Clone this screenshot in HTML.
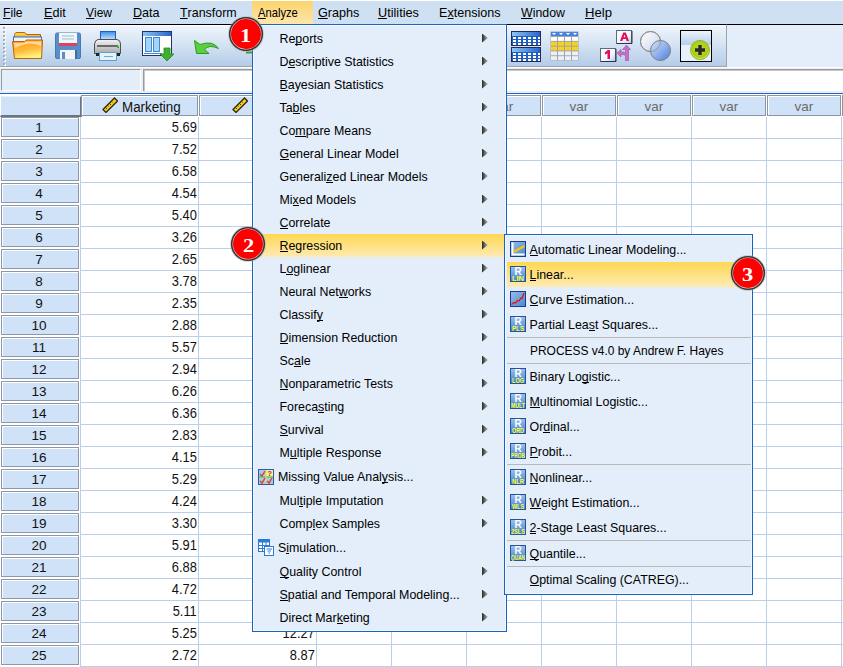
<!DOCTYPE html><html><head><meta charset="utf-8"><style>
*{box-sizing:border-box}
body{margin:0;width:843px;height:667px;overflow:hidden;position:relative;background:#fff;font-family:"Liberation Sans",sans-serif;font-size:12.3px;color:#000}
.a{position:absolute}
#mb{left:0;top:0;width:843px;height:24px;background:#cee0f2;border-top:1px solid #fff}
.mi{position:absolute;top:0;height:23px;line-height:22px;white-space:nowrap}
u{text-decoration:none;border-bottom:1px solid #000;display:inline-block;line-height:11px}
.mt u{line-height:9px}
#tb{left:0;top:24px;width:727px;height:43px;border-top:1px solid #000;background:linear-gradient(#fff,#edf3fb 2px,#d6e4f4 45%,#b4cce8);border-bottom:1px solid #a0a4a8;border-right:1px solid #a0a4a8}
#tbr{left:727px;top:24px;width:116px;height:45px;background:#e4eefa;border-top:1px solid #000}
#ce{left:0;top:67px;width:843px;height:26px;background:#e6eefa;border-top:1px solid #fff}
#nb{left:1px;top:69px;width:140px;height:22px;background:#e4eefa;border-top:1px solid #9a9a9a;border-left:1px solid #9a9a9a;border-right:1px solid #fff;border-bottom:1px solid #fff}
#vb{left:143px;top:69px;width:700px;height:22px;background:#fff;border-top:1px solid #9a9a9a;border-left:1px solid #9a9a9a;box-shadow:inset 1px 1px 0 #c8c8c8}
#bl{left:0;top:93px;width:843px;height:1px;background:#1f66c4}
#grid{left:0;top:94px;width:843px;height:573px;background:#fff}
.hc{position:absolute;background:#d0e2f8;border:1px solid #8a96a4;box-shadow:inset 1px 1px 0 #fff;text-align:center;line-height:21px;color:#6a6a6a;font-size:13.5px}
.rh{position:absolute;left:1px;width:78px;height:20px;background:#d0e2f8;border:1px solid #8c98a8;box-shadow:inset 1px 1px 0 #fff;text-align:center;line-height:20px;color:#111;font-size:13.5px;padding-right:2px}
.vl{position:absolute;top:117px;width:1px;height:550px;background:#bad0ea}
.hl{position:absolute;left:80px;width:763px;height:1px;background:#bad0ea}
.mt{position:absolute;white-space:nowrap;height:23px;font-size:12.4px}
.arr{position:absolute;width:6px;height:9px;background:linear-gradient(90deg,#282828,#585858 35%,#c0c0c0);clip-path:polygon(0 0,100% 50%,0 100%)}
.num{position:absolute;text-align:right;line-height:20px;height:22px;color:#111;font-size:14.3px;padding-right:0}
.num span{display:inline-block;transform:scaleX(0.9);transform-origin:100% 50%}
</style></head><body>

<div id="mb" class="a"></div>
<div class="a" style="left:252px;top:1px;width:61px;height:23px;background:linear-gradient(#fbd46a,#fde6ae)"></div>
<div class="mi" style="left:3.46px;top:2px;font-size:13px;transform:scaleX(0.9350);transform-origin:0 0"><u>F</u>ile</div>
<div class="mi" style="left:44.43px;top:2px;font-size:13px;transform:scaleX(0.9714);transform-origin:0 0"><u>E</u>dit</div>
<div class="mi" style="left:86.00px;top:2px;font-size:13px;transform:scaleX(0.9214);transform-origin:0 0"><u>V</u>iew</div>
<div class="mi" style="left:132.53px;top:2px;font-size:13px;transform:scaleX(0.9692);transform-origin:0 0"><u>D</u>ata</div>
<div class="mi" style="left:180.00px;top:2px;font-size:13px;transform:scaleX(0.9559);transform-origin:0 0"><u>T</u>ransform</div>
<div class="mi" style="left:257.70px;top:2px;font-size:13px;transform:scaleX(0.8609);transform-origin:0 0"><u>A</u>nalyze</div>
<div class="mi" style="left:317.53px;top:2px;font-size:13px;transform:scaleX(0.9683);transform-origin:0 0"><u>G</u>raphs</div>
<div class="mi" style="left:378.02px;top:2px;font-size:13px;transform:scaleX(0.9756);transform-origin:0 0"><u>U</u>tilities</div>
<div class="mi" style="left:439.03px;top:2px;font-size:13px;transform:scaleX(0.9677);transform-origin:0 0">E<u>x</u>tensions</div>
<div class="mi" style="left:521.00px;top:2px;font-size:13px;transform:scaleX(0.9500);transform-origin:0 0"><u>W</u>indow</div>
<div class="mi" style="left:585.09px;top:2px;font-size:13px;transform:scaleX(1.0080);transform-origin:0 0"><u>H</u>elp</div>
<div id="tb" class="a"></div><div id="tbr" class="a"></div>
<svg class="a" style="left:0;top:25px" width="728" height="41" viewBox="0 25 728 41"><defs><linearGradient id="thd" x1="0" y1="0" x2="1" y2="0"><stop offset="0" stop-color="#8cc4f4"/><stop offset="1" stop-color="#2a66c8"/></linearGradient><linearGradient id="fold" x1="0" y1="0" x2="0.3" y2="1"><stop offset="0" stop-color="#ff9a1a"/><stop offset="0.6" stop-color="#ffb838"/><stop offset="1" stop-color="#fff27a"/></linearGradient><linearGradient id="foldb" x1="0" y1="0" x2="0" y2="1"><stop offset="0" stop-color="#ffe060"/><stop offset="1" stop-color="#f4a010"/></linearGradient><linearGradient id="venn" x1="0" y1="0" x2="1" y2="1"><stop offset="0" stop-color="#d8e6fa"/><stop offset="1" stop-color="#4a7ee0"/></linearGradient><linearGradient id="venn1" x1="0" y1="0" x2="1" y2="1"><stop offset="0" stop-color="#ffffff"/><stop offset="1" stop-color="#c8d4ea"/></linearGradient><linearGradient id="sel" x1="0" y1="0" x2="0" y2="1"><stop offset="0" stop-color="#eef4fc"/><stop offset="0.45" stop-color="#b6cfec"/><stop offset="0.47" stop-color="#e6f0fb"/><stop offset="1" stop-color="#e8f1fb"/></linearGradient><radialGradient id="grn" cx="0.5" cy="0.45" r="0.55"><stop offset="0" stop-color="#c4e030"/><stop offset="0.8" stop-color="#a8cc18"/><stop offset="0.9" stop-color="#d0ea60"/><stop offset="1" stop-color="#80a810"/></radialGradient><linearGradient id="prt" x1="0" y1="0" x2="0" y2="1"><stop offset="0" stop-color="#f4f4f4"/><stop offset="1" stop-color="#a8a8a8"/></linearGradient><linearGradient id="papr" x1="0" y1="0" x2="0" y2="1"><stop offset="0" stop-color="#3c8ee8"/><stop offset="1" stop-color="#e8f4fc"/></linearGradient></defs><rect x="4" y="28" width="2" height="2" fill="#fff"/><rect x="3" y="27" width="2" height="2" fill="#a4b0bc"/><rect x="4" y="32" width="2" height="2" fill="#fff"/><rect x="3" y="31" width="2" height="2" fill="#a4b0bc"/><rect x="4" y="36" width="2" height="2" fill="#fff"/><rect x="3" y="35" width="2" height="2" fill="#a4b0bc"/><rect x="4" y="40" width="2" height="2" fill="#fff"/><rect x="3" y="39" width="2" height="2" fill="#a4b0bc"/><rect x="4" y="44" width="2" height="2" fill="#fff"/><rect x="3" y="43" width="2" height="2" fill="#a4b0bc"/><rect x="4" y="48" width="2" height="2" fill="#fff"/><rect x="3" y="47" width="2" height="2" fill="#a4b0bc"/><rect x="4" y="52" width="2" height="2" fill="#fff"/><rect x="3" y="51" width="2" height="2" fill="#a4b0bc"/><rect x="4" y="56" width="2" height="2" fill="#fff"/><rect x="3" y="55" width="2" height="2" fill="#a4b0bc"/><rect x="4" y="60" width="2" height="2" fill="#fff"/><rect x="3" y="59" width="2" height="2" fill="#a4b0bc"/><rect x="4" y="64" width="2" height="2" fill="#fff"/><rect x="3" y="63" width="2" height="2" fill="#a4b0bc"/><path d="M14.5 37.5V34.5Q15 32.5 17 32.5H24Q25.5 32.5 26.5 34.5H40.5V38.5" fill="url(#foldb)" stroke="#b8640c"/><rect x="13.5" y="37" width="28" height="6" fill="#e8f6ff" stroke="#2a70e0" stroke-width="1"/><path d="M12.5 41.5H24.5L26.5 40H42.5L41.5 58.5H14.5Z" fill="url(#fold)" stroke="#c0600a"/><path d="M14 43H24L26 41.5H41V46Q30 40 15 48Z" fill="#fff" opacity="0.55"/><path d="M55.5 34.5Q55.5 33 57 33H79Q80.5 33 80.5 34.5V57Q80.5 58.5 79 58.5H57Q55.5 58.5 55.5 57Z" fill="#5a8ec8" stroke="#4a7ab4"/><rect x="59" y="33" width="18" height="10" fill="#eef8fc"/><rect x="59" y="43" width="18" height="3" fill="#e0405a"/><path d="M62 36H74M62 39H74" stroke="#a8b8c8"/><rect x="60" y="50" width="15" height="9" fill="#f4f4f4"/><rect x="62" y="52" width="3" height="7" fill="#5a8ec8"/><rect x="75" y="50" width="2" height="9" fill="#3e6ea8"/><rect x="100.5" y="31.5" width="15" height="10" fill="url(#papr)" stroke="#1a60d0"/><path d="M94.5 44Q95 40 98 39.5H117Q120.5 40 120.5 44V53.5H94.5Z" fill="url(#prt)" stroke="#505050"/><rect x="97" y="45" width="21" height="2" fill="#6a6a6a"/><rect x="117" y="46" width="2" height="2" fill="#30c030"/><rect x="99.5" y="52.5" width="17" height="8" fill="#e6f2fa" stroke="#5aa0d8"/><path d="M104 56.5H113" stroke="#8aa0b0"/><rect x="96" y="53" width="3" height="3" fill="#222"/><rect x="117" y="53" width="3" height="3" fill="#222"/><rect x="142.5" y="31.5" width="29" height="24" fill="#fff" stroke="#26306a"/><rect x="143" y="32" width="28" height="4" fill="url(#thd)"/><rect x="145.5" y="37.5" width="6" height="14" fill="#a8d4f4" stroke="#3a8ad8"/><rect x="153.5" y="37.5" width="6" height="14" fill="#a8d4f4" stroke="#3a8ad8"/><path d="M144 53.5H162" stroke="#3a8ad8"/><path d="M164 48H170V54H174L167 61L160 54H164Z" fill="#3cb030" stroke="#2a8a20" stroke-width="0.8"/><path d="M194.5 40.5L196.5 53.5L209 53.5L204.5 49.5Q209 44 218.5 48.5Q213 40 200 44.5Z" fill="#5ad040" stroke="#2e9a20"/><path d="M246 52.5H252" stroke="#3aa028" stroke-width="2"/><rect x="511.5" y="31.5" width="29" height="14" fill="#1f5fc0" stroke="#22285a"/><rect x="512" y="32" width="28" height="4" fill="url(#thd)"/><rect x="513" y="37" width="3" height="2" fill="#fff"/><rect x="518" y="37" width="3" height="2" fill="#fff"/><rect x="523" y="37" width="3" height="2" fill="#fff"/><rect x="528" y="37" width="3" height="2" fill="#fff"/><rect x="533" y="37" width="3" height="2" fill="#fff"/><rect x="538" y="37" width="2" height="2" fill="#fff"/><rect x="513" y="40" width="3" height="2" fill="#fff"/><rect x="518" y="40" width="3" height="2" fill="#fff"/><rect x="523" y="40" width="3" height="2" fill="#fff"/><rect x="528" y="40" width="3" height="2" fill="#fff"/><rect x="533" y="40" width="3" height="2" fill="#fff"/><rect x="538" y="40" width="2" height="2" fill="#fff"/><rect x="513" y="43" width="3" height="2" fill="#fff"/><rect x="518" y="43" width="3" height="2" fill="#fff"/><rect x="523" y="43" width="3" height="2" fill="#fff"/><rect x="528" y="43" width="3" height="2" fill="#fff"/><rect x="533" y="43" width="3" height="2" fill="#fff"/><rect x="538" y="43" width="2" height="2" fill="#fff"/><rect x="511.5" y="47.5" width="29" height="14" fill="#1f5fc0" stroke="#22285a"/><rect x="512" y="48" width="28" height="4" fill="url(#thd)"/><rect x="513" y="53" width="3" height="2" fill="#fff"/><rect x="518" y="53" width="3" height="2" fill="#fff"/><rect x="523" y="53" width="3" height="2" fill="#fff"/><rect x="528" y="53" width="3" height="2" fill="#fff"/><rect x="533" y="53" width="3" height="2" fill="#fff"/><rect x="538" y="53" width="2" height="2" fill="#fff"/><rect x="513" y="56" width="3" height="2" fill="#fff"/><rect x="518" y="56" width="3" height="2" fill="#fff"/><rect x="523" y="56" width="3" height="2" fill="#fff"/><rect x="528" y="56" width="3" height="2" fill="#fff"/><rect x="533" y="56" width="3" height="2" fill="#fff"/><rect x="538" y="56" width="2" height="2" fill="#fff"/><rect x="513" y="59" width="3" height="2" fill="#fff"/><rect x="518" y="59" width="3" height="2" fill="#fff"/><rect x="523" y="59" width="3" height="2" fill="#fff"/><rect x="528" y="59" width="3" height="2" fill="#fff"/><rect x="533" y="59" width="3" height="2" fill="#fff"/><rect x="538" y="59" width="2" height="2" fill="#fff"/><rect x="550.5" y="31.5" width="28" height="29" fill="#9ca4b0"/><rect x="551" y="32" width="27" height="4" fill="#4a82dc"/><rect x="551" y="37.0" width="6" height="3.9" fill="#ffffff"/><rect x="558" y="37.0" width="6" height="3.9" fill="#ffffff"/><rect x="565" y="37.0" width="6" height="3.9" fill="#ffffff"/><rect x="572" y="37.0" width="6" height="3.9" fill="#ffffff"/><rect x="551" y="41.8" width="6" height="3.9" fill="#f8d020"/><rect x="558" y="41.8" width="6" height="3.9" fill="#f8d020"/><rect x="565" y="41.8" width="6" height="3.9" fill="#f8d020"/><rect x="572" y="41.8" width="6" height="3.9" fill="#f8d020"/><rect x="551" y="46.6" width="6" height="3.9" fill="#f8d020"/><rect x="558" y="46.6" width="6" height="3.9" fill="#f8d020"/><rect x="565" y="46.6" width="6" height="3.9" fill="#f8d020"/><rect x="572" y="46.6" width="6" height="3.9" fill="#f8d020"/><rect x="551" y="51.4" width="6" height="3.9" fill="#eef0f6"/><rect x="558" y="51.4" width="6" height="3.9" fill="#eef0f6"/><rect x="565" y="51.4" width="6" height="3.9" fill="#eef0f6"/><rect x="572" y="51.4" width="6" height="3.9" fill="#eef0f6"/><rect x="551" y="56.2" width="6" height="3.9" fill="#eef0f6"/><rect x="558" y="56.2" width="6" height="3.9" fill="#eef0f6"/><rect x="565" y="56.2" width="6" height="3.9" fill="#eef0f6"/><rect x="572" y="56.2" width="6" height="3.9" fill="#eef0f6"/><path d="M552 33H556L554 35Z" fill="#fff"/><path d="M559 33H563L561 35Z" fill="#fff"/><path d="M566 33H570L568 35Z" fill="#fff"/><path d="M573 33H577L575 35Z" fill="#fff"/><defs><linearGradient id="box" x1="0" y1="0" x2="1" y2="1"><stop offset="0" stop-color="#ffffff"/><stop offset="0.6" stop-color="#f4f6fa"/><stop offset="1" stop-color="#b8c4dc"/></linearGradient></defs><rect x="616.5" y="30.5" width="15" height="13" fill="url(#box)" stroke="#5a6a80"/><path d="M617 43.5H632V31" stroke="#2a3448" fill="none"/><path d="M620 41L623.2 32.5H625.8L629 41H626.6L626 39H623L622.4 41ZM623.6 37.2H625.4L624.5 34.4Z" fill="#e0105a"/><rect x="600.5" y="48.5" width="15" height="13" fill="url(#box)" stroke="#5a6a80"/><path d="M601 61.5H616V49" stroke="#2a3448" fill="none"/><path d="M607.5 50H610V59H607.5V53.2Q606.5 54 605 54.4V52.2Q606.8 51.6 607.5 50Z" fill="#e0105a"/><path d="M626.5 45L630.5 49.5H628.5V60.5H625.5V56Q625 54.5 622.5 54.5H621V57L617 53L621 49.5V52H623Q624.5 52 625.5 53V49.5H622.5Z" fill="#c870c8" stroke="#9a4aa0" stroke-width="0.6"/><circle cx="650.5" cy="41.5" r="10" fill="url(#venn1)" stroke="#8a8a8a"/><circle cx="660.5" cy="50.5" r="10" fill="url(#venn)" stroke="#7a7a7a"/><circle cx="650.5" cy="41.5" r="10" fill="none" stroke="#8a8a8a" opacity="0.8"/><rect x="680.5" y="30.5" width="31" height="31" fill="url(#sel)" stroke="#000"/><circle cx="700" cy="50" r="9.6" fill="url(#grn)" stroke="#86ac14" stroke-width="0.8"/><path d="M698.3 45H701.7V48.3H705V51.7H701.7V55H698.3V51.7H695V48.3H698.3Z" fill="#2a2a2a"/></svg>
<div id="ce" class="a"></div><div id="nb" class="a"></div><div id="vb" class="a"></div><div id="bl" class="a"></div>
<div id="grid" class="a"></div>
<div class="a" style="left:0;top:96px;width:82px;height:21px;background:#d0e2f8;border-right:2px solid #6c7480;border-bottom:2px solid #6c7480;border-left:1px solid #fff;border-top:1px solid #e8f0fa"></div>
<div class="hc" style="left:81px;top:95px;width:117px;height:21px"><svg width="16" height="16" viewBox="0 0 16 16" style="position:absolute;left:20px;top:1px"><path d="M1 12.5L12.5 1L15.5 4L4 15.5Z" fill="#f4cc20" stroke="#2e2a10" stroke-width="1.3"/><path d="M3.5 10.5L5 12M5.5 8.5L6.5 9.5M7.5 6.5L9 8M9.5 4.5L10.5 5.5" stroke="#2e2a10" stroke-width="0.9"/></svg><span style="position:absolute;left:40px;top:1px;color:#111;font-size:14px;transform:scaleX(0.955);transform-origin:0 0">Marketing</span></div>
<div class="hc" style="left:199px;top:95px;width:117px;height:21px"><svg width="16" height="16" viewBox="0 0 16 16" style="position:absolute;left:32px;top:1px"><path d="M1 12.5L12.5 1L15.5 4L4 15.5Z" fill="#f4cc20" stroke="#2e2a10" stroke-width="1.3"/><path d="M3.5 10.5L5 12M5.5 8.5L6.5 9.5M7.5 6.5L9 8M9.5 4.5L10.5 5.5" stroke="#2e2a10" stroke-width="0.9"/></svg></div>
<div class="hc" style="left:317px;top:95px;width:74px;height:21px">var</div>
<div class="hc" style="left:392px;top:95px;width:74px;height:21px">var</div>
<div class="hc" style="left:467px;top:95px;width:74px;height:21px">var</div>
<div class="hc" style="left:542px;top:95px;width:74px;height:21px">var</div>
<div class="hc" style="left:617px;top:95px;width:74px;height:21px">var</div>
<div class="hc" style="left:692px;top:95px;width:74px;height:21px">var</div>
<div class="hc" style="left:767px;top:95px;width:74px;height:21px">var</div>
<div class="hc" style="left:842px;top:95px;width:74px;height:21px">var</div>
<div class="vl" style="left:80px"></div>
<div class="vl" style="left:198px"></div>
<div class="vl" style="left:316px"></div>
<div class="vl" style="left:391px"></div>
<div class="vl" style="left:466px"></div>
<div class="vl" style="left:541px"></div>
<div class="vl" style="left:616px"></div>
<div class="vl" style="left:691px"></div>
<div class="vl" style="left:766px"></div>
<div class="vl" style="left:841px"></div>
<div class="vl" style="left:916px"></div>
<div class="hl" style="top:138px"></div>
<div class="rh" style="top:117px">1</div>
<div class="num" style="left:80px;top:117px;width:116.5px"><span>5.69</span></div>
<div class="hl" style="top:160px"></div>
<div class="rh" style="top:139px">2</div>
<div class="num" style="left:80px;top:139px;width:116.5px"><span>7.52</span></div>
<div class="hl" style="top:182px"></div>
<div class="rh" style="top:161px">3</div>
<div class="num" style="left:80px;top:161px;width:116.5px"><span>6.58</span></div>
<div class="hl" style="top:204px"></div>
<div class="rh" style="top:183px">4</div>
<div class="num" style="left:80px;top:183px;width:116.5px"><span>4.54</span></div>
<div class="hl" style="top:226px"></div>
<div class="rh" style="top:205px">5</div>
<div class="num" style="left:80px;top:205px;width:116.5px"><span>5.40</span></div>
<div class="hl" style="top:248px"></div>
<div class="rh" style="top:227px">6</div>
<div class="num" style="left:80px;top:227px;width:116.5px"><span>3.26</span></div>
<div class="hl" style="top:270px"></div>
<div class="rh" style="top:249px">7</div>
<div class="num" style="left:80px;top:249px;width:116.5px"><span>2.65</span></div>
<div class="hl" style="top:292px"></div>
<div class="rh" style="top:271px">8</div>
<div class="num" style="left:80px;top:271px;width:116.5px"><span>3.78</span></div>
<div class="hl" style="top:314px"></div>
<div class="rh" style="top:293px">9</div>
<div class="num" style="left:80px;top:293px;width:116.5px"><span>2.35</span></div>
<div class="hl" style="top:336px"></div>
<div class="rh" style="top:315px">10</div>
<div class="num" style="left:80px;top:315px;width:116.5px"><span>2.88</span></div>
<div class="hl" style="top:358px"></div>
<div class="rh" style="top:337px">11</div>
<div class="num" style="left:80px;top:337px;width:116.5px"><span>5.57</span></div>
<div class="hl" style="top:380px"></div>
<div class="rh" style="top:359px">12</div>
<div class="num" style="left:80px;top:359px;width:116.5px"><span>2.94</span></div>
<div class="hl" style="top:402px"></div>
<div class="rh" style="top:381px">13</div>
<div class="num" style="left:80px;top:381px;width:116.5px"><span>6.26</span></div>
<div class="hl" style="top:424px"></div>
<div class="rh" style="top:403px">14</div>
<div class="num" style="left:80px;top:403px;width:116.5px"><span>6.36</span></div>
<div class="hl" style="top:446px"></div>
<div class="rh" style="top:425px">15</div>
<div class="num" style="left:80px;top:425px;width:116.5px"><span>2.83</span></div>
<div class="hl" style="top:468px"></div>
<div class="rh" style="top:447px">16</div>
<div class="num" style="left:80px;top:447px;width:116.5px"><span>4.15</span></div>
<div class="hl" style="top:490px"></div>
<div class="rh" style="top:469px">17</div>
<div class="num" style="left:80px;top:469px;width:116.5px"><span>5.29</span></div>
<div class="hl" style="top:512px"></div>
<div class="rh" style="top:491px">18</div>
<div class="num" style="left:80px;top:491px;width:116.5px"><span>4.24</span></div>
<div class="hl" style="top:534px"></div>
<div class="rh" style="top:513px">19</div>
<div class="num" style="left:80px;top:513px;width:116.5px"><span>3.30</span></div>
<div class="hl" style="top:556px"></div>
<div class="rh" style="top:535px">20</div>
<div class="num" style="left:80px;top:535px;width:116.5px"><span>5.91</span></div>
<div class="hl" style="top:578px"></div>
<div class="rh" style="top:557px">21</div>
<div class="num" style="left:80px;top:557px;width:116.5px"><span>6.88</span></div>
<div class="hl" style="top:600px"></div>
<div class="rh" style="top:579px">22</div>
<div class="num" style="left:80px;top:579px;width:116.5px"><span>4.72</span></div>
<div class="hl" style="top:622px"></div>
<div class="rh" style="top:601px">23</div>
<div class="num" style="left:80px;top:601px;width:116.5px"><span>5.11</span></div>
<div class="hl" style="top:644px"></div>
<div class="rh" style="top:623px">24</div>
<div class="num" style="left:80px;top:623px;width:116.5px"><span>5.25</span></div>
<div class="num" style="left:198px;top:623px;width:116.5px"><span>12.27</span></div>
<div class="hl" style="top:666px"></div>
<div class="rh" style="top:645px">25</div>
<div class="num" style="left:80px;top:645px;width:116.5px"><span>2.72</span></div>
<div class="num" style="left:198px;top:645px;width:116.5px"><span>8.87</span></div>
<div class="a" style="left:252px;top:24px;width:255px;height:608px;background:#e3eefa;border:1px solid #1664c0;box-shadow:inset 1px 1px 0 #f8f8ff,inset -1px -1px 0 #f4f6ff"></div>
<div class="mt" style="left:279.5px;top:28px;line-height:23px">Re<u>p</u>orts</div>
<div class="arr" style="left:482px;top:33.5px"></div>
<div class="mt" style="left:279.5px;top:51px;line-height:23px">D<u>e</u>scriptive Statistics</div>
<div class="arr" style="left:482px;top:56.5px"></div>
<div class="mt" style="left:279.5px;top:74px;line-height:23px"><u>B</u>ayesian Statistics</div>
<div class="arr" style="left:482px;top:79.5px"></div>
<div class="mt" style="left:279.5px;top:97px;line-height:23px">Ta<u>b</u>les</div>
<div class="arr" style="left:482px;top:102.5px"></div>
<div class="mt" style="left:279.5px;top:120px;line-height:23px">Co<u>m</u>pare Means</div>
<div class="arr" style="left:482px;top:125.5px"></div>
<div class="mt" style="left:279.5px;top:143px;line-height:23px"><u>G</u>eneral Linear Model</div>
<div class="arr" style="left:482px;top:148.5px"></div>
<div class="mt" style="left:279.5px;top:166px;line-height:23px">Generali<u>z</u>ed Linear Models</div>
<div class="arr" style="left:482px;top:171.5px"></div>
<div class="mt" style="left:279.5px;top:189px;line-height:23px">Mi<u>x</u>ed Models</div>
<div class="arr" style="left:482px;top:194.5px"></div>
<div class="mt" style="left:279.5px;top:212px;line-height:23px"><u>C</u>orrelate</div>
<div class="arr" style="left:482px;top:217.5px"></div>
<div class="a" style="left:253px;top:234px;width:253px;height:23px;background:linear-gradient(#ffd852,#fdeab4)"></div>
<div class="mt" style="left:279.5px;top:235px;line-height:23px"><u>R</u>egression</div>
<div class="arr" style="left:482px;top:240.5px"></div>
<div class="mt" style="left:279.5px;top:258px;line-height:23px">L<u>o</u>glinear</div>
<div class="arr" style="left:482px;top:263.5px"></div>
<div class="mt" style="left:279.5px;top:281px;line-height:23px">Neural Net<u>w</u>orks</div>
<div class="arr" style="left:482px;top:286.5px"></div>
<div class="mt" style="left:279.5px;top:304px;line-height:23px">Classif<u>y</u></div>
<div class="arr" style="left:482px;top:309.5px"></div>
<div class="mt" style="left:279.5px;top:327px;line-height:23px"><u>D</u>imension Reduction</div>
<div class="arr" style="left:482px;top:332.5px"></div>
<div class="mt" style="left:279.5px;top:350px;line-height:23px">Sc<u>a</u>le</div>
<div class="arr" style="left:482px;top:355.5px"></div>
<div class="mt" style="left:279.5px;top:373px;line-height:23px"><u>N</u>onparametric Tests</div>
<div class="arr" style="left:482px;top:378.5px"></div>
<div class="mt" style="left:279.5px;top:396px;line-height:23px">Foreca<u>s</u>ting</div>
<div class="arr" style="left:482px;top:401.5px"></div>
<div class="mt" style="left:279.5px;top:419px;line-height:23px"><u>S</u>urvival</div>
<div class="arr" style="left:482px;top:424.5px"></div>
<div class="mt" style="left:279.5px;top:442px;line-height:23px">M<u>u</u>ltiple Response</div>
<div class="arr" style="left:482px;top:447.5px"></div>
<div class="mt" style="left:278px;top:465px;line-height:25px">Missing Value Anal<u>y</u>sis...</div>
<svg class="a" style="left:258px;top:469px" width="16" height="16" viewBox="0 0 16 16"><rect x="0.5" y="0.5" width="15" height="15" fill="#a8c8f0" stroke="#2a5ab0"/><rect x="8" y="1" width="7" height="7" fill="#f8f080"/><path d="M1 8H15" stroke="#60c040" stroke-width="1.2"/><path d="M8 1V15" stroke="#e8e060" stroke-width="1"/><path d="M2 5L4 7L7 2M2 12L4 14L7 9M9 12L11 14L14 9" stroke="#e04020" stroke-width="1.4" fill="none"/><text x="11.5" y="7" text-anchor="middle" font-size="7.5" font-weight="bold" font-family="Liberation Sans" fill="#8a2a9a">?</text></svg>
<div class="mt" style="left:279.5px;top:490px;line-height:23px">Mul<u>t</u>iple Imputation</div>
<div class="arr" style="left:482px;top:495.5px"></div>
<div class="mt" style="left:279.5px;top:513px;line-height:23px">Comp<u>l</u>ex Samples</div>
<div class="arr" style="left:482px;top:518.5px"></div>
<div class="mt" style="left:278px;top:536px;line-height:25px">S<u>i</u>mulation...</div>
<svg class="a" style="left:258px;top:539px" width="17" height="17" viewBox="0 0 17 17"><rect x="0.5" y="0.5" width="11" height="12" fill="#fff" stroke="#2a7ad8"/><rect x="1" y="1" width="10" height="2.5" fill="#2a7ad8"/><path d="M0.5 6.5H11.5M0.5 9.5H11.5M4.5 0.5V12.5M8 0.5V12.5" stroke="#2a7ad8"/><rect x="6.5" y="7.5" width="9" height="9" fill="#fff" stroke="#2a7ad8"/><path d="M8.5 10H14M9.5 12H13M10.5 14H12" stroke="#2a7ad8" stroke-width="1.2"/></svg>
<div class="mt" style="left:279.5px;top:561px;line-height:23px"><u>Q</u>uality Control</div>
<div class="arr" style="left:482px;top:566.5px"></div>
<div class="mt" style="left:279.5px;top:584px;line-height:23px"><u>S</u>patial and Temporal Modeling...</div>
<div class="arr" style="left:482px;top:589.5px"></div>
<div class="mt" style="left:279.5px;top:607px;line-height:23px">Direct Mar<u>k</u>eting</div>
<div class="arr" style="left:482px;top:612.5px"></div>
<div class="a" style="left:504px;top:234px;width:249px;height:361px;background:#e3eefa;border:1px solid #1664c0;box-shadow:inset 1px 1px 0 #f8f8ff,inset -1px -1px 0 #f4f6ff"></div>
<div class="mt" style="left:529.5px;top:238px;line-height:25px;font-size:12.4px;"><u>A</u>utomatic Linear Modeling...</div>
<svg class="a" style="left:510px;top:241px" width="16" height="16" viewBox="0 0 16 16"><defs><linearGradient id="ga" x1="0" y1="0" x2="1" y2="1"><stop offset="0" stop-color="#9cbce4"/><stop offset="1" stop-color="#4a8ad0"/></linearGradient></defs><rect x="0.5" y="0.5" width="15" height="15" fill="url(#ga)" stroke="#1c3c94"/><path d="M1.5 1.5H3.5V12.5H14.5V14.5H1.5Z" fill="#fff"/><path d="M3.5 11L14.5 5" stroke="#f4c800" stroke-width="2"/></svg>
<div class="a" style="left:507px;top:262px;width:244px;height:25px;background:linear-gradient(#ffd852,#fdeab4)"></div>
<div class="mt" style="left:529.5px;top:263px;line-height:25px;font-size:12.4px;"><u>L</u>inear...</div>
<svg class="a" style="left:510px;top:266px" width="16" height="16" viewBox="0 0 16 16"><defs><linearGradient id="g262" x1="0" y1="0" x2="0" y2="1"><stop offset="0" stop-color="#9ec0e8"/><stop offset="0.5" stop-color="#6ea0dc"/><stop offset="1" stop-color="#3a80d0"/></linearGradient></defs><rect x="0.5" y="0.5" width="15" height="15" fill="url(#g262)" stroke="#24549c"/><text x="8" y="9" text-anchor="middle" font-size="10" font-weight="bold" font-family="Liberation Sans" fill="#fff">R</text><text x="8" y="14.6" text-anchor="middle" font-size="6.5" font-weight="bold" font-family="Liberation Sans" fill="#ffff30" textLength="12" lengthAdjust="spacingAndGlyphs">LIN</text></svg>
<div class="mt" style="left:529.5px;top:288px;line-height:25px;font-size:12.4px;"><u>C</u>urve Estimation...</div>
<svg class="a" style="left:510px;top:291px" width="16" height="16" viewBox="0 0 16 16"><defs><linearGradient id="gc" x1="0" y1="0" x2="1" y2="1"><stop offset="0" stop-color="#9cbce4"/><stop offset="1" stop-color="#4a8ad0"/></linearGradient></defs><rect x="0.5" y="0.5" width="15" height="15" fill="url(#gc)" stroke="#1c3c94"/><path d="M1.5 13.5L4 11.5L5.5 12L7.5 9.5L9 10L11 7L12 7.5L14 2" stroke="#d81818" stroke-width="1.3" fill="none"/></svg>
<div class="mt" style="left:529.5px;top:313px;line-height:25px;font-size:12.4px;">Partial Lea<u>s</u>t Squares...</div>
<svg class="a" style="left:510px;top:316px" width="16" height="16" viewBox="0 0 16 16"><defs><linearGradient id="g312" x1="0" y1="0" x2="0" y2="1"><stop offset="0" stop-color="#9ec0e8"/><stop offset="0.5" stop-color="#6ea0dc"/><stop offset="1" stop-color="#3a80d0"/></linearGradient></defs><rect x="0.5" y="0.5" width="15" height="15" fill="url(#g312)" stroke="#24549c"/><text x="8" y="9" text-anchor="middle" font-size="10" font-weight="bold" font-family="Liberation Sans" fill="#fff">R</text><text x="8" y="14.6" text-anchor="middle" font-size="6.5" font-weight="bold" font-family="Liberation Sans" fill="#ffff30" textLength="12" lengthAdjust="spacingAndGlyphs">PLS</text></svg>
<div class="a" style="left:507px;top:337px;width:244px;height:1px;background:#b9b9b9"></div>
<div class="mt" style="left:529.5px;top:339px;line-height:25px;font-size:12.4px;transform:scaleX(0.965);transform-origin:0 0;">PROCESS v4.0 by Andrew F. Hayes</div>
<div class="a" style="left:507px;top:363px;width:244px;height:1px;background:#b9b9b9"></div>
<div class="mt" style="left:529.5px;top:365px;line-height:25px;font-size:12.4px;">Binary Lo<u>g</u>istic...</div>
<svg class="a" style="left:510px;top:368px" width="16" height="16" viewBox="0 0 16 16"><defs><linearGradient id="g364" x1="0" y1="0" x2="0" y2="1"><stop offset="0" stop-color="#9ec0e8"/><stop offset="0.5" stop-color="#6ea0dc"/><stop offset="1" stop-color="#3a80d0"/></linearGradient></defs><rect x="0.5" y="0.5" width="15" height="15" fill="url(#g364)" stroke="#24549c"/><text x="8" y="9" text-anchor="middle" font-size="10" font-weight="bold" font-family="Liberation Sans" fill="#fff">R</text><text x="8" y="14.6" text-anchor="middle" font-size="6.5" font-weight="bold" font-family="Liberation Sans" fill="#ffff30" textLength="12" lengthAdjust="spacingAndGlyphs">LOG</text></svg>
<div class="mt" style="left:529.5px;top:390px;line-height:25px;font-size:12.4px;"><u>M</u>ultinomial Logistic...</div>
<svg class="a" style="left:510px;top:393px" width="16" height="16" viewBox="0 0 16 16"><defs><linearGradient id="g389" x1="0" y1="0" x2="0" y2="1"><stop offset="0" stop-color="#9ec0e8"/><stop offset="0.5" stop-color="#6ea0dc"/><stop offset="1" stop-color="#3a80d0"/></linearGradient></defs><rect x="0.5" y="0.5" width="15" height="15" fill="url(#g389)" stroke="#24549c"/><text x="8" y="9" text-anchor="middle" font-size="10" font-weight="bold" font-family="Liberation Sans" fill="#fff">R</text><text x="8" y="14.6" text-anchor="middle" font-size="6.5" font-weight="bold" font-family="Liberation Sans" fill="#ffff30" textLength="14" lengthAdjust="spacingAndGlyphs">MULT</text></svg>
<div class="mt" style="left:529.5px;top:415px;line-height:25px;font-size:12.4px;">Or<u>d</u>inal...</div>
<svg class="a" style="left:510px;top:418px" width="16" height="16" viewBox="0 0 16 16"><defs><linearGradient id="g414" x1="0" y1="0" x2="0" y2="1"><stop offset="0" stop-color="#9ec0e8"/><stop offset="0.5" stop-color="#6ea0dc"/><stop offset="1" stop-color="#3a80d0"/></linearGradient></defs><rect x="0.5" y="0.5" width="15" height="15" fill="url(#g414)" stroke="#24549c"/><text x="8" y="9" text-anchor="middle" font-size="10" font-weight="bold" font-family="Liberation Sans" fill="#fff">R</text><text x="8" y="14.6" text-anchor="middle" font-size="6.5" font-weight="bold" font-family="Liberation Sans" fill="#ffff30" textLength="12" lengthAdjust="spacingAndGlyphs">ORD</text></svg>
<div class="mt" style="left:529.5px;top:440px;line-height:25px;font-size:12.4px;"><u>P</u>robit...</div>
<svg class="a" style="left:510px;top:443px" width="16" height="16" viewBox="0 0 16 16"><defs><linearGradient id="g439" x1="0" y1="0" x2="0" y2="1"><stop offset="0" stop-color="#9ec0e8"/><stop offset="0.5" stop-color="#6ea0dc"/><stop offset="1" stop-color="#3a80d0"/></linearGradient></defs><rect x="0.5" y="0.5" width="15" height="15" fill="url(#g439)" stroke="#24549c"/><text x="8" y="9" text-anchor="middle" font-size="10" font-weight="bold" font-family="Liberation Sans" fill="#fff">R</text><text x="8" y="14.6" text-anchor="middle" font-size="6.5" font-weight="bold" font-family="Liberation Sans" fill="#ffff30" textLength="14" lengthAdjust="spacingAndGlyphs">PROB</text></svg>
<div class="a" style="left:507px;top:464px;width:244px;height:1px;background:#b9b9b9"></div>
<div class="mt" style="left:529.5px;top:466px;line-height:25px;font-size:12.4px;"><u>N</u>onlinear...</div>
<svg class="a" style="left:510px;top:469px" width="16" height="16" viewBox="0 0 16 16"><defs><linearGradient id="g465" x1="0" y1="0" x2="0" y2="1"><stop offset="0" stop-color="#9ec0e8"/><stop offset="0.5" stop-color="#6ea0dc"/><stop offset="1" stop-color="#3a80d0"/></linearGradient></defs><rect x="0.5" y="0.5" width="15" height="15" fill="url(#g465)" stroke="#24549c"/><text x="8" y="9" text-anchor="middle" font-size="10" font-weight="bold" font-family="Liberation Sans" fill="#fff">R</text><text x="8" y="14.6" text-anchor="middle" font-size="6.5" font-weight="bold" font-family="Liberation Sans" fill="#ffff30" textLength="12" lengthAdjust="spacingAndGlyphs">NLR</text></svg>
<div class="mt" style="left:529.5px;top:491px;line-height:25px;font-size:12.4px;"><u>W</u>eight Estimation...</div>
<svg class="a" style="left:510px;top:494px" width="16" height="16" viewBox="0 0 16 16"><defs><linearGradient id="g490" x1="0" y1="0" x2="0" y2="1"><stop offset="0" stop-color="#9ec0e8"/><stop offset="0.5" stop-color="#6ea0dc"/><stop offset="1" stop-color="#3a80d0"/></linearGradient></defs><rect x="0.5" y="0.5" width="15" height="15" fill="url(#g490)" stroke="#24549c"/><text x="8" y="9" text-anchor="middle" font-size="10" font-weight="bold" font-family="Liberation Sans" fill="#fff">R</text><text x="8" y="14.6" text-anchor="middle" font-size="6.5" font-weight="bold" font-family="Liberation Sans" fill="#ffff30" textLength="12" lengthAdjust="spacingAndGlyphs">WLS</text></svg>
<div class="mt" style="left:529.5px;top:516px;line-height:25px;font-size:12.4px;"><u>2</u>-Stage Least Squares...</div>
<svg class="a" style="left:510px;top:519px" width="16" height="16" viewBox="0 0 16 16"><defs><linearGradient id="g515" x1="0" y1="0" x2="0" y2="1"><stop offset="0" stop-color="#9ec0e8"/><stop offset="0.5" stop-color="#6ea0dc"/><stop offset="1" stop-color="#3a80d0"/></linearGradient></defs><rect x="0.5" y="0.5" width="15" height="15" fill="url(#g515)" stroke="#24549c"/><text x="8" y="9" text-anchor="middle" font-size="10" font-weight="bold" font-family="Liberation Sans" fill="#fff">R</text><text x="8" y="14.6" text-anchor="middle" font-size="6.5" font-weight="bold" font-family="Liberation Sans" fill="#ffff30" textLength="14" lengthAdjust="spacingAndGlyphs">2SLS</text></svg>
<div class="a" style="left:507px;top:540px;width:244px;height:1px;background:#b9b9b9"></div>
<div class="mt" style="left:529.5px;top:542px;line-height:25px;font-size:12.4px;"><u>Q</u>uantile...</div>
<svg class="a" style="left:510px;top:545px" width="16" height="16" viewBox="0 0 16 16"><defs><linearGradient id="g541" x1="0" y1="0" x2="0" y2="1"><stop offset="0" stop-color="#9ec0e8"/><stop offset="0.5" stop-color="#6ea0dc"/><stop offset="1" stop-color="#3a80d0"/></linearGradient></defs><rect x="0.5" y="0.5" width="15" height="15" fill="url(#g541)" stroke="#24549c"/><text x="8" y="9" text-anchor="middle" font-size="10" font-weight="bold" font-family="Liberation Sans" fill="#fff">R</text><text x="8" y="14.6" text-anchor="middle" font-size="6.5" font-weight="bold" font-family="Liberation Sans" fill="#ffff30" textLength="14" lengthAdjust="spacingAndGlyphs">QUAN</text></svg>
<div class="a" style="left:507px;top:566px;width:244px;height:1px;background:#b9b9b9"></div>
<div class="mt" style="left:529.5px;top:568px;line-height:25px;font-size:12.4px;"><u>O</u>ptimal Scaling (CATREG)...</div>
<svg class="a" style="left:227.8px;top:16px" width="36" height="36" viewBox="0 0 36 36"><circle cx="18" cy="18" r="18" fill="#b0b0b0" opacity="0.5"/><circle cx="18" cy="18" r="17.1" fill="#363636"/><circle cx="18" cy="18" r="15.5" fill="#f4d0d0"/><circle cx="18" cy="18" r="15" fill="#f00"/></svg>
<div class="a" style="left:228.3px;top:16.5px;width:35px;height:35px;color:#fff;font-family:Liberation Serif,serif;font-weight:bold;font-size:18px;line-height:39px;text-align:center"><span style="display:inline-block;transform:scaleX(1.25)">1</span></div>
<svg class="a" style="left:230px;top:226px" width="36" height="36" viewBox="0 0 36 36"><circle cx="18" cy="18" r="18" fill="#b0b0b0" opacity="0.5"/><circle cx="18" cy="18" r="17.1" fill="#363636"/><circle cx="18" cy="18" r="15.5" fill="#f4d0d0"/><circle cx="18" cy="18" r="15" fill="#f00"/></svg>
<div class="a" style="left:230.5px;top:226.5px;width:35px;height:35px;color:#fff;font-family:Liberation Serif,serif;font-weight:bold;font-size:18px;line-height:39px;text-align:center"><span style="display:inline-block;transform:scaleX(1.25)">2</span></div>
<svg class="a" style="left:729.8px;top:255px" width="36" height="36" viewBox="0 0 36 36"><circle cx="18" cy="18" r="18" fill="#b0b0b0" opacity="0.5"/><circle cx="18" cy="18" r="17.1" fill="#363636"/><circle cx="18" cy="18" r="15.5" fill="#f4d0d0"/><circle cx="18" cy="18" r="15" fill="#f00"/></svg>
<div class="a" style="left:730.3px;top:255.5px;width:35px;height:35px;color:#fff;font-family:Liberation Serif,serif;font-weight:bold;font-size:18px;line-height:39px;text-align:center"><span style="display:inline-block;transform:scaleX(1.25)">3</span></div>
</body></html>
